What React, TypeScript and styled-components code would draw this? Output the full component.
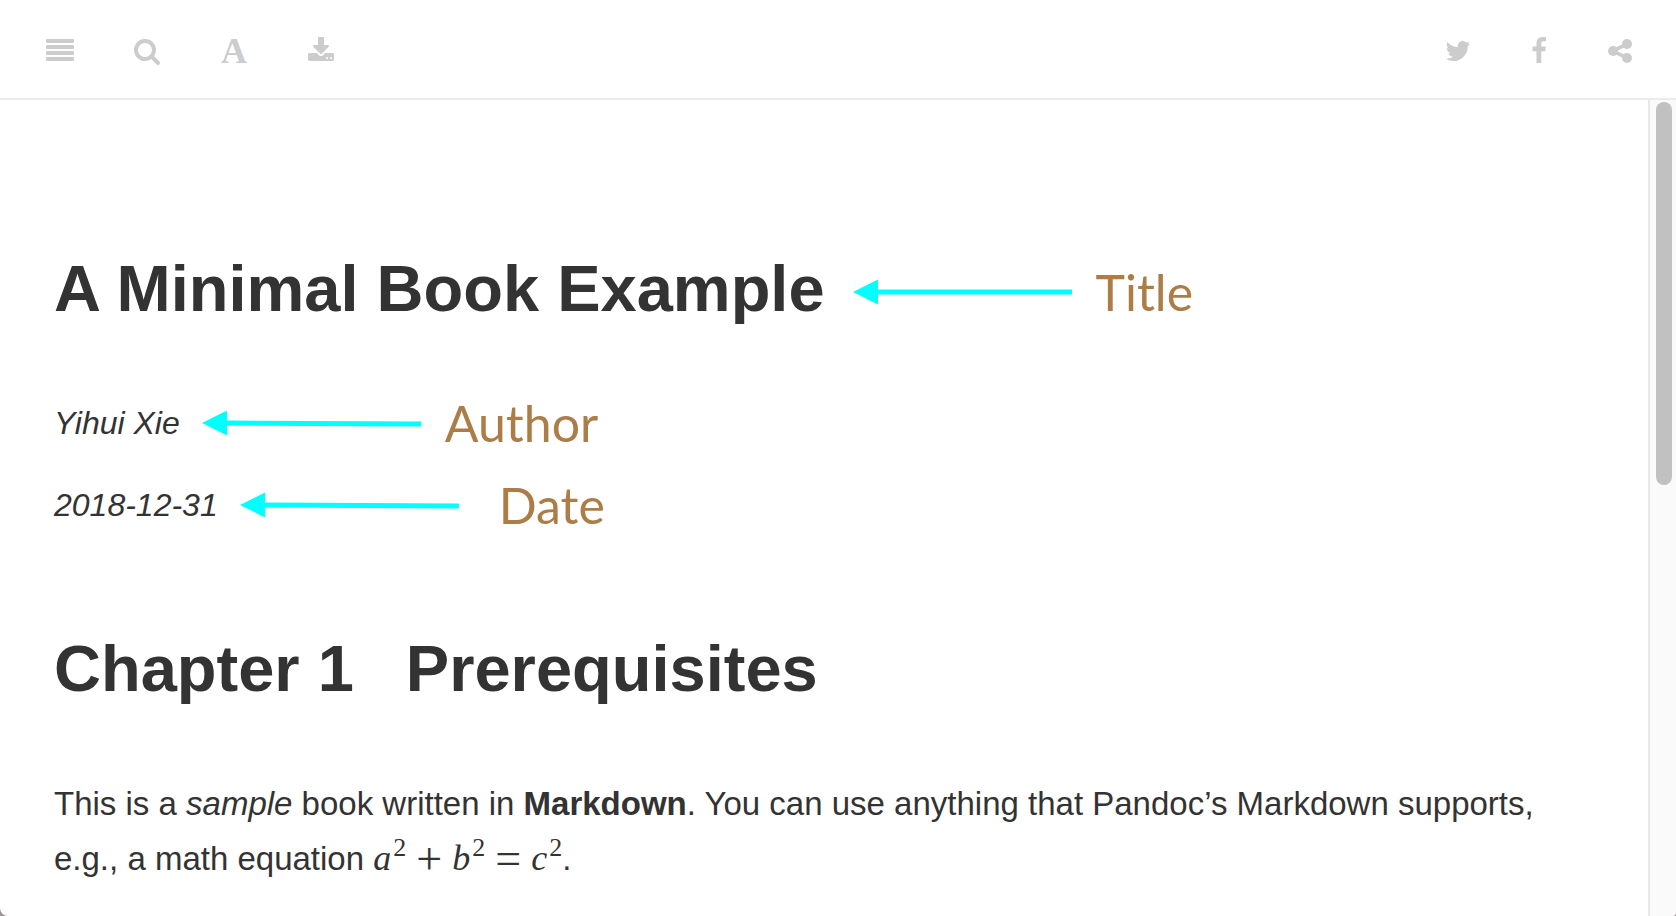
import React from "react";
import styled, { createGlobalStyle } from "styled-components";

const GlobalStyle = createGlobalStyle`
  *, *::before, *::after { box-sizing: border-box; }
  body {
    margin: 0;
    background: #9a9496;
    color: #333;
    font-family: "Liberation Sans", Arial, sans-serif;
  }
`;

const Page = styled.div`
  display: flex;
  flex-direction: column;
  height: 100vh;
  overflow: hidden;
  background: #fff;
  border-radius: 0 0 4px 8px;
`;

const Toolbar = styled.header`
  display: flex;
  flex: none;
  justify-content: space-between;
  padding: 37px 42px 33px 46px;
  border-bottom: 2px solid #ebebeb;
`;

const ToolGroup = styled.nav<{ $gap: number }>`
  display: flex;
  gap: ${(p) => p.$gap}px;
`;

const ToolButton = styled.button`
  display: flex;
  align-items: center;
  justify-content: center;
  width: 28px;
  height: 28px;
  padding: 0;
  border: 0;
  background: none;
  color: #ccc;
  cursor: pointer;
  font: bold 36px/30px "Liberation Serif", "Times New Roman", serif;
`;

const IconSvg = styled.svg`
  display: block;
  width: 28px;
  height: 28px;
  fill: currentColor;
`;

const Body = styled.div`
  display: flex;
  flex: 1;
  min-height: 0;
`;

const Content = styled.main`
  flex: 1;
  min-width: 0;
  overflow: hidden;
  padding: 152px 96px 0 54px;
`;

const ScrollTrack = styled.div`
  flex: none;
  width: 28px;
  padding: 2px 4px 0 6px;
  border-left: 2px solid #e8e8e8;
  background: #fafafa;
`;

const ScrollThumb = styled.div`
  width: 16px;
  height: 47%;
  border-radius: 8px;
  background: #c1c1c1;
`;

const AnnotatedRow = styled.div<{ $height: number; $gap: number }>`
  display: flex;
  align-items: center;
  height: ${(p) => p.$height}px;
  gap: ${(p) => p.$gap}px;
`;

const Heading = styled.h1`
  margin: 0;
  padding-bottom: 6px;
  font-size: 65px;
  font-weight: 700;
  line-height: 74px;
  white-space: nowrap;
`;

const SectionNumber = styled.span`
  margin-right: 52px;
`;

const Byline = styled.p`
  margin: 0;
  font-size: 32px;
  font-style: italic;
  line-height: 54px;
`;

const Note = styled.span<{ $gap: number }>`
  display: flex;
  align-items: center;
  gap: ${(p) => p.$gap}px;
  color: #ac7d46;
  font: 50px/60px Lato, sans-serif;
`;

const ArrowSvg = styled.svg`
  display: block;
  width: 219px;
  height: 28px;
`;

const Bylines = styled.div`
  padding: 64px 0 72px;
`;

const Paragraph = styled.p`
  margin: 64px 0 0;
  font-size: 33px;
  line-height: 55px;
`;

const Formula = styled.span`
  font-family: "Liberation Serif", "Times New Roman", serif;
  font-size: 36px;
  line-height: 1;
  white-space: nowrap;

  sup {
    font-size: 26px;
    line-height: 0;
    vertical-align: 14px;
    margin-left: 2px;
  }
`;

const Operator = styled.span`
  margin: 0 10px;
  font-size: 46px;
  line-height: 0;
  vertical-align: -4px;
`;

const icons = {
  search:
    "M1216 832q0-185-131.5-316.5t-316.5-131.5-316.5 131.5-131.5 316.5 131.5 316.5 316.5 131.5 316.5-131.5 131.5-316.5zm512 832q0 52-38 90t-90 38q-54 0-90-38l-343-342q-179 124-399 124-143 0-273.5-55.5t-225-150-150-225-55.5-273.5 55.5-273.5 150-225 225-150 273.5-55.5 273.5 55.5 225 150 150 225 55.5 273.5q0 220-124 399l343 343q37 37 37 90z",
  menu:
    "M64 128h1664q64 0 64 64v128q0 64-64 64H64q-64 0-64-64V192q0-64 64-64zM64 512h1664q64 0 64 64v128q0 64-64 64H64q-64 0-64-64V576q0-64 64-64zM64 896h1664q64 0 64 64v128q0 64-64 64H64q-64 0-64-64V960q0-64 64-64zM64 1280h1664q64 0 64 64v128q0 64-64 64H64q-64 0-64-64v-128q0-64 64-64z",
  download:
    "M1344 1344q0-26-19-45t-45-19-45 19-19 45 19 45 45 19 45-19 19-45zm256 0q0-26-19-45t-45-19-45 19-19 45 19 45 45 19 45-19 19-45zm128-224v320q0 40-28 68t-68 28h-1472q-40 0-68-28t-28-68v-320q0-40 28-68t68-28h465l135 136q58 56 136 56t136-56l136-136h464q40 0 68 28t28 68zm-325-569q17 41-14 70l-448 448q-18 19-45 19t-45-19l-448-448q-31-29-14-70 17-39 59-39h256v-448q0-26 19-45t45-19h256q26 0 45 19t19 45v448h256q42 0 59 39z",
  twitter:
    "M1684 408q-67 98-162 167 1 14 1 42 0 130-38 259.5t-115.5 248.5-184.5 210.5-258 146-323 54.5q-271 0-496-145 35 4 78 4 225 0 401-138-105-2-188-64.5t-114-159.5q33 5 61 5 43 0 85-11-112-23-185.5-111.5t-73.5-205.5v-4q68 38 146 41-66-44-105-115t-39-154q0-88 44-163 121 149 294.5 238.5t371.5 99.5q-8-38-8-74 0-134 94.5-228.5t228.5-94.5q140 0 236 102 109-21 205-78-37 115-142 178 93-10 186-50z",
  facebook:
    "M1343 12v264h-157q-86 0-116 36t-30 108v189h293l-39 296h-254v759h-306v-759h-255v-296h255v-218q0-186 104-288.5t277-102.5q147 0 228 12z",
  share:
    "M1344 1024q133 0 226.5 93.5t93.5 226.5-93.5 226.5-226.5 93.5-226.5-93.5-93.5-226.5q0-12 2-34l-360-180q-92 86-218 86-133 0-226.5-93.5t-93.5-226.5 93.5-226.5 226.5-93.5q126 0 218 86l360-180q-2-22-2-34 0-133 93.5-226.5t226.5-93.5 226.5 93.5 93.5 226.5-93.5 226.5-226.5 93.5q-126 0-218-86l-360 180q2 22 2 34t-2 34l360 180q92-86 218-86z",
};

function Icon({ name }: { name: keyof typeof icons }) {
  return (
    <IconSvg viewBox="0 0 1792 1792" aria-hidden="true">
      <path d={icons[name]} />
    </IconSvg>
  );
}

function Arrow({ slope = 0 }: { slope?: number }) {
  return (
    <ArrowSvg viewBox="0 0 219 28" aria-hidden="true">
      <path d="M0 14L25 1.5V26.5Z" fill="#0ff" />
      <path d={`M24 14L219 ${14 + slope}`} stroke="#0ff" strokeWidth="5" />
    </ArrowSvg>
  );
}

export default function App() {
  return (
    <>
      <GlobalStyle />
      <Page>
        <Toolbar>
          <ToolGroup $gap={59} aria-label="Book tools">
            <ToolButton aria-label="Toggle sidebar"><Icon name="menu" /></ToolButton>
            <ToolButton aria-label="Search"><Icon name="search" /></ToolButton>
            <ToolButton aria-label="Font settings">A</ToolButton>
            <ToolButton aria-label="Download"><Icon name="download" /></ToolButton>
          </ToolGroup>
          <ToolGroup $gap={53} aria-label="Sharing">
            <ToolButton aria-label="Twitter"><Icon name="twitter" /></ToolButton>
            <ToolButton aria-label="Facebook"><Icon name="facebook" /></ToolButton>
            <ToolButton aria-label="Share"><Icon name="share" /></ToolButton>
          </ToolGroup>
        </Toolbar>
        <Body>
          <Content>
            <AnnotatedRow $height={80} $gap={28}>
              <Heading>A Minimal Book Example</Heading>
              <Note $gap={24}><Arrow />Title</Note>
            </AnnotatedRow>
            <Bylines>
              <AnnotatedRow $height={54} $gap={22}>
                <Byline>Yihui Xie</Byline>
                <Note $gap={24}><Arrow slope={1} />Author</Note>
              </AnnotatedRow>
              <AnnotatedRow $height={110} $gap={22}>
                <Byline>2018-12-31</Byline>
                <Note $gap={40}><Arrow slope={1} />Date</Note>
              </AnnotatedRow>
            </Bylines>
            <Heading>
              <SectionNumber>Chapter 1</SectionNumber>Prerequisites
            </Heading>
            <Paragraph>
              This is a <em>sample</em> book written in <strong>Markdown</strong>. You can use
              anything that Pandoc’s Markdown supports, e.g., a math equation{" "}
              <Formula>
                <i>a</i><sup>2</sup><Operator>+</Operator>
                <i>b</i><sup>2</sup><Operator>=</Operator>
                <i>c</i><sup>2</sup>
              </Formula>.
            </Paragraph>
          </Content>
          <ScrollTrack><ScrollThumb /></ScrollTrack>
        </Body>
      </Page>
    </>
  );
}
